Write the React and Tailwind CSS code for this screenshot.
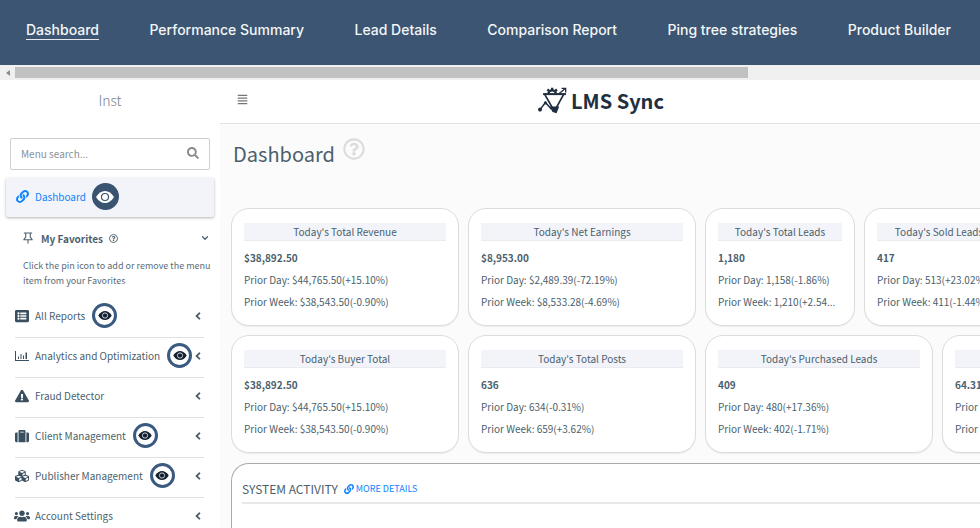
import React, { useState } from 'react';
import {
  FaAlignJustify,
  FaAngleLeft,
  FaCubes,
  FaExclamationTriangle,
  FaLink,
  FaListAlt,
  FaRegQuestionCircle,
  FaSearch,
  FaSuitcase,
  FaUsers,
} from 'react-icons/fa';
import { ChevronDown } from 'lucide-react';

const TABS = [
  'Dashboard',
  'Performance Summary',
  'Lead Details',
  'Comparison Report',
  'Ping tree strategies',
  'Product Builder',
];

const BarChartIcon = ({ className }) => (
  <svg viewBox="0 0 28 24" className={className} fill="currentColor" aria-hidden="true">
    <path d="M0 2h2v18h26v2H0zM6 13h2v5H6zM11 8h2v10h-2zM16 11h2v7h-2zM21 5h3v13h-3z" />
  </svg>
);

const PinIcon = ({ className }) => (
  <svg viewBox="0 0 22 26" className={className} fill="none" stroke="currentColor" strokeWidth="2.4" aria-hidden="true">
    <path d="M2 2h18M6 2v9l-4 5v1h18v-1l-4-5V2M11 17v8" />
  </svg>
);

const EyeIcon = ({ className, ring }) => (
  <svg viewBox="0 0 36 24" className={className} aria-hidden="true">
    <path d="M0 12C5 4 11 0 18 0s13 4 18 12c-5 8-11 12-18 12S5 20 0 12z" fill="currentColor" />
    <circle cx="18" cy="12" r="7" fill="none" stroke={ring} strokeWidth="2.4" />
  </svg>
);

const LogoIcon = ({ className }) => (
  <svg viewBox="0 0 86 80" className={className} fill="none" stroke="currentColor" aria-hidden="true">
    <path d="M15 21h68" strokeWidth="6" />
    <path d="M20 22l25 44h7l24-44" strokeWidth="5" />
    <path d="M35 58h28l-8 20-12-4z" fill="currentColor" stroke="none" />
    <path d="M31 20a11 10 0 0 1 22 0" strokeWidth="7" />
    <path d="M42 9V2M33 12l-5-5M51 12l5-5" strokeWidth="7" />
    <path d="M63 19L79 6M70 4h12v12" strokeWidth="4" />
    <path d="M6 67l16-21 18 20" strokeWidth="4.5" />
    <circle cx="6" cy="67" r="6" fill="currentColor" stroke="none" />
    <circle cx="22" cy="47" r="4.5" fill="currentColor" stroke="none" />
  </svg>
);

const MENU = [
  { label: 'All Reports', icon: FaListAlt, watch: true },
  { label: 'Analytics and Optimization', icon: BarChartIcon, watch: true },
  { label: 'Fraud Detector', icon: FaExclamationTriangle },
  { label: 'Client Management', icon: FaSuitcase, watch: true },
  { label: 'Publisher Management', icon: FaCubes, watch: true },
  { label: 'Account Settings', icon: FaUsers, wide: true },
];

const TOP_STATS = [
  { title: "Today's Total Revenue", value: '$38,892.50', day: '$44,765.50(+15.10%)', week: '$38,543.50(-0.90%)' },
  { title: "Today's Net Earnings", value: '$8,953.00', day: '$2,489.39(-72.19%)', week: '$8,533.28(-4.69%)' },
  { title: "Today's Total Leads", value: '1,180', day: '1,158(-1.86%)', week: '1,210(+2.54...', narrow: true },
  { title: "Today's Sold Leads", value: '417', day: '513(+23.02%)', week: '411(-1.44%)', narrow: true },
];

const BOTTOM_STATS = [
  { title: "Today's Buyer Total", value: '$38,892.50', day: '$44,765.50(+15.10%)', week: '$38,543.50(-0.90%)' },
  { title: "Today's Total Posts", value: '636', day: '634(-0.31%)', week: '659(+3.62%)' },
  { title: "Today's Purchased Leads", value: '409', day: '480(+17.36%)', week: '402(-1.71%)' },
  { title: '', value: '64.31%', day: '', week: '' },
];

const StatCard = ({ stat }) => (
  <article
    className={`shrink-0 rounded-[18px] border border-[#dcdcdc] bg-white px-3 pt-3.5 pb-3 shadow-[0_1px_1px_rgba(0,0,0,0.06)] ${
      stat.narrow ? 'w-[150px]' : 'w-[228px]'
    }`}
  >
    <h3 className="mb-1.5 h-[18px] border-b border-[#e9ebf0] bg-[#f3f4fa] text-center text-[10px] leading-[17px] whitespace-nowrap">
      {stat.title}
    </h3>
    <p className="text-[10px] leading-[22px] font-bold">{stat.value}</p>
    <p className="text-[10px] leading-[22px] whitespace-nowrap">Prior Day: {stat.day}</p>
    <p className="text-[10px] leading-[22px] whitespace-nowrap">Prior Week: {stat.week}</p>
  </article>
);

const MenuItem = ({ item }) => {
  const Icon = item.icon;
  return (
    <li className="border-b border-[#dfe1e3]">
      <button type="button" className="flex h-[39px] w-full items-center pb-1 text-[10px]">
        <span className="mr-1.5 flex w-3.5 shrink-0 justify-center text-[#3a4f60]">
          <Icon className={item.wide ? 'size-4 shrink-0' : 'size-3.5 shrink-0'} />
        </span>
        <span className="whitespace-nowrap">{item.label}</span>
        {item.watch && (
          <span className="ml-[7px] flex size-[25px] shrink-0 items-center justify-center rounded-full border-3 border-[#3b5a80] bg-white text-[#14202f]">
            <EyeIcon className="h-[9px] w-3.5" ring="#d5dce5" />
          </span>
        )}
        <FaAngleLeft className="ml-auto size-3 shrink-0" />
      </button>
    </li>
  );
};

export default function App() {
  const [tab, setTab] = useState('Dashboard');
  const [query, setQuery] = useState('');

  return (
    <div className="h-screen overflow-hidden bg-white font-['Noto_Sans_CJK_SC',sans-serif] text-[#4b5f6d]">
      <nav className="flex h-[65px] items-center justify-between bg-[#3b5572] pr-[29px] pb-1 pl-[26px] font-['Inter',sans-serif]">
        {TABS.map((name) => (
          <button
            key={name}
            type="button"
            onClick={() => setTab(name)}
            className={`border-b text-[14px] leading-[18px] font-medium whitespace-nowrap text-[#f4f6f8] ${
              tab === name ? 'border-[#e4e8ed]' : 'border-transparent'
            }`}
          >
            {name}
          </button>
        ))}
      </nav>

      <div className="flex h-[15px] items-center bg-[#f0f0f0]">
        <span className="flex w-[15px] justify-center">
          <svg viewBox="0 0 4 6" className="h-1.5 w-1" aria-hidden="true">
            <path d="M4 0v6L0 3z" fill="#8c8c8c" />
          </svg>
        </span>
        <div className="flex-1">
          <div className="h-[11px] w-[76%] bg-[#c1c1c1]" />
        </div>
      </div>

      <div className="flex">
        <aside className="w-[220px] shrink-0">
          <p className="pt-2 text-center text-[14px] leading-6 font-light text-[#74838e]">Inst</p>

          <div className="mx-2.5 mt-6.5 flex h-8 items-center rounded-xs border border-[#cfcfcf] px-2.5 pb-0.5">
            <input
              type="text"
              aria-label="Menu search"
              placeholder="Menu search..."
              value={query}
              onChange={(e) => setQuery(e.target.value)}
              className="min-w-0 flex-1 text-[10px] outline-none placeholder:text-[#86929b]"
            />
            <FaSearch className="size-3 text-[#8b8b8b]" />
          </div>

          <a
            href="#dashboard"
            className="mx-1.5 mt-2 flex h-[39px] items-center rounded-xs bg-[#f3f4fa] px-2.5 pb-0.5 text-[10px] text-[#0d84ff] shadow-[0_1px_3px_rgba(0,0,0,0.3)]"
          >
            <FaLink className="mr-1.5 size-[13px]" />
            Dashboard
            <span className="ml-1.5 flex size-[27px] items-center justify-center rounded-full bg-[#3a5370] text-white">
              <EyeIcon className="h-3 w-[18px]" ring="#3a5370" />
            </span>
          </a>

          <section className="pt-[11px] pr-3 pl-[23px]">
            <div className="flex h-5 items-center text-[10px] font-bold">
              <PinIcon className="mr-2 h-3 w-2.5" />
              My Favorites
              <FaRegQuestionCircle className="ml-1.5 size-[9px]" />
              <ChevronDown className="ml-auto -mr-0.5 size-2.5" strokeWidth={3} />
            </div>
            <p className="pt-2.5 text-[9px] leading-[15px] whitespace-nowrap text-[#5b6d79]">
              Click the pin icon to add or remove the menu
              <br />
              item from your Favorites
            </p>
          </section>

          <ul className="mr-4 ml-[15px] pt-[10px]">
            {MENU.map((item) => (
              <MenuItem key={item.label} item={item} />
            ))}
          </ul>
        </aside>

        <div className="min-w-0 flex-1">
          <header className="relative flex h-11 items-center justify-center border-b border-[#e2e2e2] pb-0.5">
            <button type="button" aria-label="Toggle menu" className="absolute left-[17px] pb-0.5 text-[#777]">
              <FaAlignJustify className="size-[11px]" />
            </button>
            <div className="flex items-center gap-1 pl-0.5 text-[#1f2f40]">
              <LogoIcon className="h-[27px] w-[29px]" />
              <span className="text-[20px] leading-6 font-bold">LMS Sync</span>
            </div>
          </header>

          <main className="bg-[#fbfbfb] pl-[11px]">
            <div className="flex h-[84px] gap-2 pt-3.5 pl-0.5">
              <h1 className="text-[20px] leading-8">Dashboard</h1>
              <FaRegQuestionCircle className="size-[22px] text-[#dcdcdc]" />
            </div>

            <div className="flex gap-[9px] overflow-hidden pb-[9px]">
              {TOP_STATS.map((stat) => (
                <StatCard key={stat.title} stat={stat} />
              ))}
            </div>
            <div className="flex gap-[9px] overflow-hidden pb-2.5">
              {BOTTOM_STATS.map((stat) => (
                <StatCard key={stat.value + stat.title} stat={stat} />
              ))}
            </div>

            <section className="h-screen rounded-tl-[18px] border-t border-l border-[#aaa] bg-white pt-3 pl-2.5">
              <div className="flex items-center gap-1.5 border-b-2 border-[#e8e8e8]">
                <h2 className="text-[12px] leading-[26px]">SYSTEM ACTIVITY</h2>
                <a href="#activity" className="flex items-center gap-0.5 text-[9px] text-[#0d84ff]">
                  <FaLink className="size-2.5" />
                  MORE DETAILS
                </a>
              </div>
            </section>
          </main>
        </div>
      </div>
    </div>
  );
}
